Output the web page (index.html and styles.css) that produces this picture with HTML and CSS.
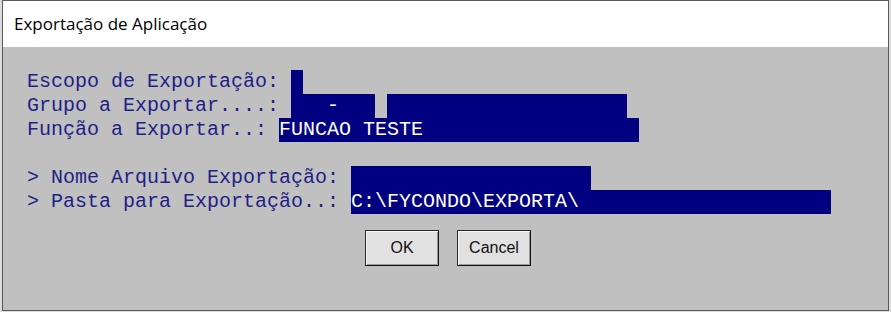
FILE: index.html
```html
<!DOCTYPE html>
<html lang="pt">
<head>
    <meta charset="UTF-8">
    <title>Exportação de Aplicação</title>
    <link rel="stylesheet" href="styles.css">
</head>
<body>
    <div class="window">
        <div class="titlebar">Exportação de Aplicação</div>
        <div class="panel">
            <div class="row">
                <span class="label">Escopo de Exportação: </span><span class="field w1"></span>
            </div>
            <div class="row">
                <span class="label">Grupo a Exportar....: </span><span class="field w7">   -</span><span class="gap"></span><span class="field w20"></span>
            </div>
            <div class="row">
                <span class="label">Função a Exportar..: </span><span class="field w30">FUNCAO TESTE</span>
            </div>
            <div class="row"></div>
            <div class="row">
                <span class="label">&gt; Nome Arquivo Exportação: </span><span class="field w20"></span>
            </div>
            <div class="row">
                <span class="label">&gt; Pasta para Exportação..: </span><span class="field w40">C:\FYCONDO\EXPORTA\</span>
            </div>
            <div class="buttons">
                <button class="btn">OK</button>
                <button class="btn">Cancel</button>
            </div>
        </div>
    </div>
</body>
</html>
```

FILE: styles.css
```css
body {
    margin: 0;
    background-color: #dcdcdc;
    height: 312px;
    overflow: hidden;
}
.window {
    margin-left: 2px;
    width: 885px;
    height: 309px;
    border: 1px solid #5a5a5a;
    display: flex;
    flex-direction: column;
    background-color: #c0c0c0;
}
.titlebar {
    background-color: white;
    height: 46px;
    line-height: 46px;
    padding-left: 11px;
    font-family: "Open Sans", sans-serif;
    font-size: 17px;
    color: #000;
}
.panel {
    flex: 1;
    padding: 23px 0 0 24px;
    font-family: "Liberation Mono", monospace;
    font-size: 20px;
    line-height: 24px;
}
.row {
    display: flex;
    height: 24px;
    white-space: pre;
}
.label {
    color: #1f1f88;
}
.field {
    background-color: #000080;
    color: white;
    height: 24px;
    overflow: hidden;
}
.gap {
    width: 1ch;
}
.w1 { width: 1ch; }
.w7 { width: 7ch; }
.w20 { width: 20ch; }
.w30 { width: 30ch; }
.w40 { width: 40ch; }
.buttons {
    display: flex;
    justify-content: center;
    gap: 18px;
    margin-top: 16px;
    padding-right: 19px;
}
.btn {
    width: 74px;
    height: 36px;
    background-color: #e1e1e1;
    border: 1px solid #2a2a2a;
    border-right-color: #111;
    border-bottom-color: #111;
    box-shadow: inset 1px 1px #f8f8f8, inset -1px -1px #9a9a9a;
    font-family: "Liberation Sans", Arial, sans-serif;
    font-size: 16px;
    color: #111;
    padding: 0;
}
```
